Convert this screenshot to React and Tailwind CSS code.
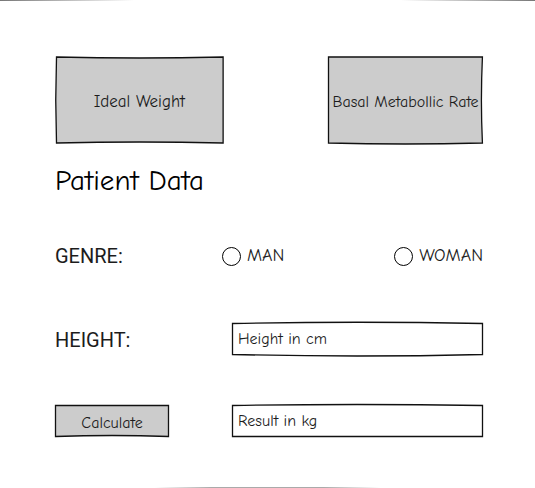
const hand = "font-['Comic_Neue','Comic_Sans_MS',Lato,sans-serif]";

function Sketch({ width, height, d, fill }) {
  return (
    <svg
      aria-hidden="true"
      viewBox={`0 0 ${width} ${height}`}
      preserveAspectRatio="none"
      className="pointer-events-none absolute inset-0 h-full w-full overflow-visible"
    >
      <path d={d} fill={fill} stroke="#111" strokeWidth="1.3" strokeLinejoin="miter" />
    </svg>
  );
}

function SketchButton({ children, className, ...sketch }) {
  return (
    <button type="button" className={`relative pt-[3px] whitespace-nowrap text-[#1c1c1c] ${className}`}>
      <Sketch fill="#cccccc" {...sketch} />
      <span className="relative">{children}</span>
    </button>
  );
}

function SketchInput({ id, label, placeholder, readOnly, ...sketch }) {
  return (
    <div className="relative h-8 flex-1">
      <Sketch fill="#ffffff" {...sketch} />
      <input
        id={id}
        type="text"
        aria-label={label}
        readOnly={readOnly}
        placeholder={placeholder}
        className="relative h-full w-full bg-transparent px-[6px] text-[#1c1c1c] outline-none placeholder:text-[#1c1c1c]"
      />
    </div>
  );
}

function Choice({ value, children }) {
  return (
    <label className="flex items-center gap-[6px] text-lg leading-6 text-[#1c1c1c]">
      <input
        type="radio"
        name="genre"
        value={value}
        className="size-[19px] appearance-none rounded-full border border-black bg-white checked:bg-[#cccccc]"
      />
      {children}
    </label>
  );
}

export default function App() {
  return (
    <div className={`flex min-h-screen flex-col bg-white text-base ${hand}`}>
      <div className="h-px bg-[linear-gradient(to_right,#777_0%,transparent_25%,transparent_75%,#777_100%)]" />
      <main className="pt-[55px] pr-[52px] pl-[55px]">
        <nav className="flex h-[88px] justify-between">
          <SketchButton
            className="w-[39.4%] text-[17px]"
            width={168}
            height={88}
            d="M1.5 1 Q84 3 167.5 1 L167.5 87 Q84 85 1.5 87 Q0 44 1.5 1 Z"
          >
            Ideal Weight
          </SketchButton>
          <SketchButton
            className="w-[36.2%] text-base"
            width={155}
            height={88}
            d="M0.5 1 L154.5 1 Q152.5 44 154.5 87 Q77 89 0.5 87 Z"
          >
            Basal Metabollic Rate
          </SketchButton>
        </nav>
        <h1 className="mt-[19px] text-[29px] leading-9 text-black">Patient Data</h1>
        <form className="mt-[41px] flex flex-col gap-[51px]">
          <div role="radiogroup" aria-labelledby="genre" className="flex h-8 items-center">
            <span id="genre" className="w-[39%] font-[Roboto,sans-serif] text-xl text-[#1c1c1c]">
              GENRE:
            </span>
            <div className="flex flex-1 justify-between">
              <Choice value="man">MAN</Choice>
              <Choice value="woman">WOMAN</Choice>
            </div>
          </div>
          <div className="flex items-center">
            <label htmlFor="height" className="w-[177px] pt-[2px] font-[Roboto,sans-serif] text-xl text-[#1c1c1c]">
              HEIGHT:
            </label>
            <SketchInput
              id="height"
              label="Height"
              placeholder="Height in cm"
              width={251}
              height={32}
              d="M0.5 0.5 Q125 -2 250.5 0.5 L250.5 31.5 Q125 34.5 0.5 31.5 Z"
            />
          </div>
          <div className="-mt-px flex items-center">
            <div className="flex w-[177px]">
              <SketchButton
                className="h-8 w-[114px] text-base"
                width={114}
                height={32}
                d="M0.5 0.5 L113.5 0.5 L113.5 31.5 Q57 29.5 0.5 31.5 Z"
              >
                Calculate
              </SketchButton>
            </div>
            <SketchInput
              id="result"
              label="Result"
              placeholder="Result in kg"
              readOnly
              width={251}
              height={32}
              d="M0.5 0.5 Q125 -1.5 250.5 0.5 L250.5 31.5 L0.5 31.5 Z"
            />
          </div>
        </form>
      </main>
      <div className="mx-auto mt-auto h-px w-[42%] bg-[linear-gradient(to_right,transparent,#aaa_25%,#aaa_75%,transparent)]" />
    </div>
  );
}
